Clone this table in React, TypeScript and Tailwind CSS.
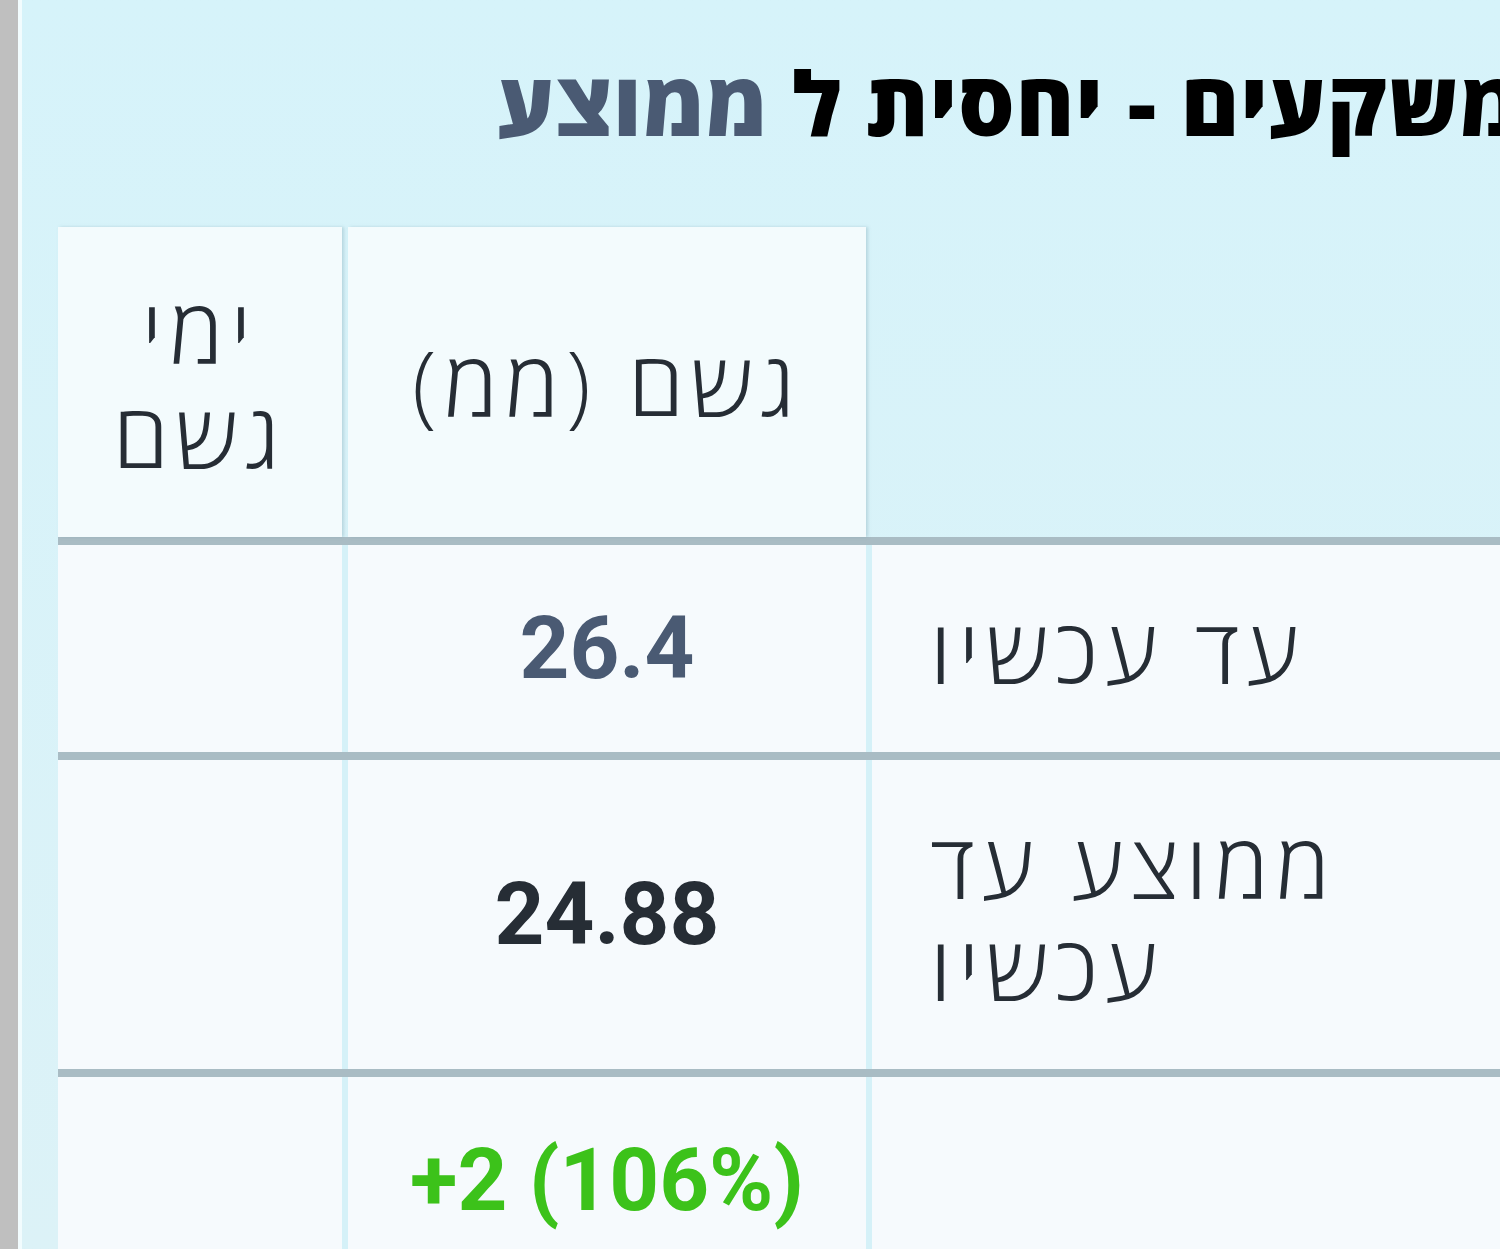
const rows = [
	{ value: '26.4', valueClass: 'text-[#4a5a73]', label: 'עד עכשיו', height: 'h-[215px]' },
	{ value: '24.88', valueClass: 'text-[#262d35]', label: 'ממוצע עד עכשיו', height: 'h-[317px]' },
	{ value: '+2 (106%)', valueClass: 'text-[#3cc21a]', label: '', height: 'h-[215px]' },
];

export default function App() {
	return (
		<div className="w-[1500px] h-[1249px] overflow-hidden flex bg-[#d8f3f9]">
			<div className="w-[18px] shrink-0 bg-[#bfbfbf]" />
			<div className="w-[4px] shrink-0 bg-[#f2fcfe]" />
			<div className="flex-1 flex flex-col bg-gradient-to-b from-[#d6f3fa] to-[#dcf2f7] pl-[36px]">
				<div className="h-[227px] shrink-0 pb-[24px] flex items-center justify-end -mr-[22px]">
					<h1
						dir="rtl"
						className="whitespace-nowrap text-[89px] font-extrabold leading-none tracking-[0.01em] text-black font-['Open_Sans','DejaVu_Sans',sans-serif]"
					>
						משקעים - יחסית ל <span className="text-[#4a5a73]">ממוצע</span>
					</h1>
				</div>

				<div className="flex flex-col shrink-0 font-['Open_Sans','DejaVu_Sans',sans-serif]">
					{/* header */}
					<div className="grid grid-cols-[284px_518px_1fr] gap-x-[6px] h-[318px] shrink-0 border-b-[8px] border-[#a9bcc4]">
						<div className="bg-[#f3fbfd] flex flex-col items-center justify-center text-center text-[90px] font-light leading-[105px] tracking-[0.08em] text-[#262d35] shadow-[2px_0_3px_rgba(120,160,175,0.35)]" dir="rtl">
							<span>ימי</span>
							<span>גשם</span>
						</div>
						<div className="bg-[#f3fbfd] flex items-center justify-center text-[90px] font-light tracking-[0.08em] text-[#262d35] shadow-[2px_0_3px_rgba(120,160,175,0.35)]" dir="rtl">
							גשם (ממ)
						</div>
						<div />
					</div>

					{rows.map((row, i) => (
						<div
							key={i}
							className={`grid grid-cols-[284px_518px_1fr] gap-x-[6px] shrink-0 bg-[#d5f1f8] border-b-[8px] border-[#a9bcc4] ${row.height}`}
						>
							<div className="bg-[#f6fafd]" />
							<div className="bg-[#f6fafd] flex items-center justify-center">
								<span className={`text-[87px] font-bold font-['Roboto',sans-serif] ${row.valueClass}`}>
									{row.value}
								</span>
							</div>
							<div className="bg-[#f6fafd] flex items-center pl-[58px]">
								<span dir="rtl" className="max-w-[440px] text-left text-[90px] font-light leading-[102px] tracking-[0.08em] text-[#262d35]">
									{row.label}
								</span>
							</div>
						</div>
					))}
				</div>
			</div>
		</div>
	);
}
